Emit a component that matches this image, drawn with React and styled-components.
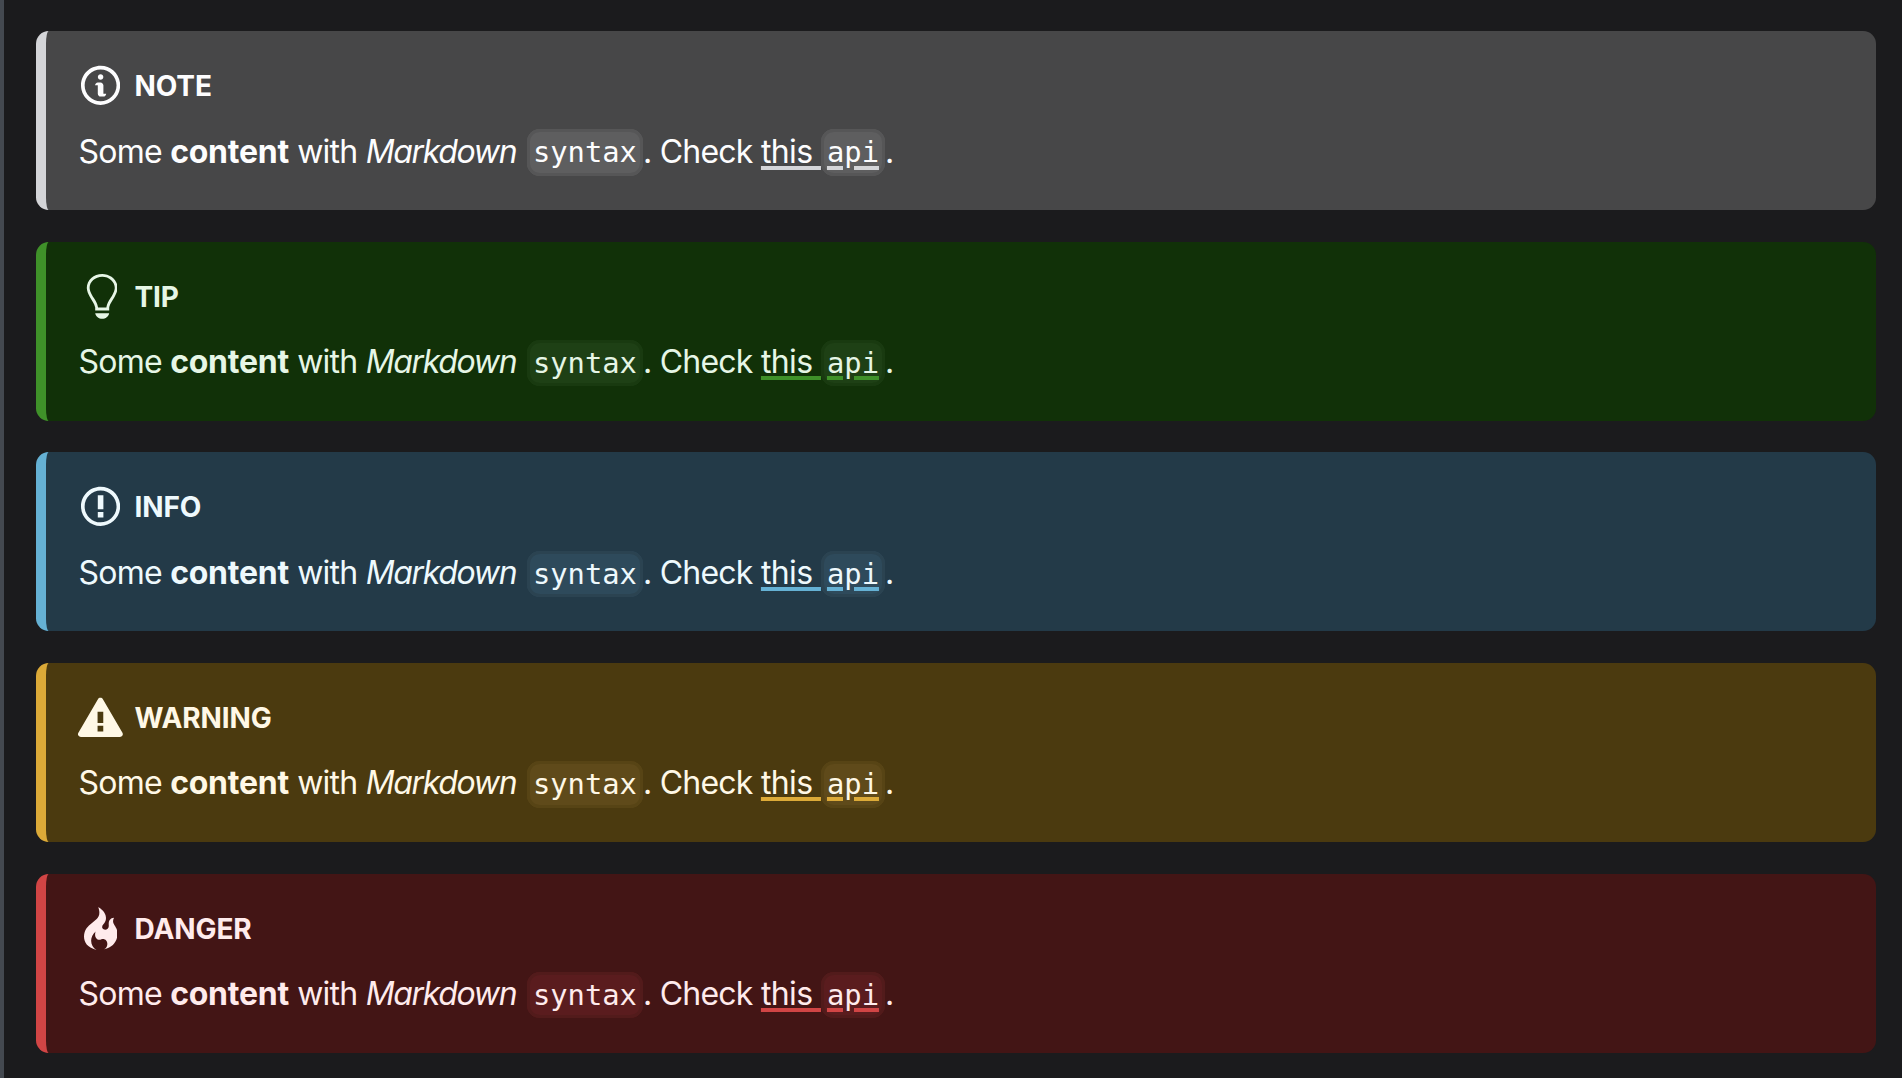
import React from 'react'
import styled, { createGlobalStyle } from 'styled-components'

const GlobalStyle = createGlobalStyle`
  * {
    box-sizing: border-box;
  }
  body {
    margin: 0;
    background: #1b1b1d;
    font-family: Inter, "Liberation Sans", sans-serif;
  }
`

const variants = {
  note: {
    bg: '#474748',
    bar: '#d4d5d8',
    text: '#fdfdfe',
    codeBg: '#5e5e5f',
    codeBorder: '#565657',
  },
  tip: {
    bg: '#113108',
    bar: '#3f9129',
    text: '#e6f6e6',
    codeBg: '#1e4015',
    codeBorder: '#193a10',
  },
  info: {
    bg: '#233a48',
    bar: '#65b1d4',
    text: '#eef9fd',
    codeBg: '#2e4a5b',
    codeBorder: '#2b4351',
  },
  warning: {
    bg: '#4b3a0f',
    bar: '#dcaa38',
    text: '#fff8e6',
    codeBg: '#5f4a1a',
    codeBorder: '#574415',
  },
  danger: {
    bg: '#431515',
    bar: '#d14545',
    text: '#ffebec',
    codeBg: '#5a1c1e',
    codeBorder: '#521b1b',
  },
}

const icons = {
  note: {
    box: '0 0 14 16',
    d: 'M6.3 5.69a.942.942 0 0 1-.28-.7c0-.28.09-.52.28-.7.19-.18.42-.28.7-.28.28 0 .52.09.7.28.18.19.28.42.28.7 0 .28-.09.52-.28.7a1 1 0 0 1-.7.3c-.28 0-.52-.11-.7-.3zM8 7.99c-.02-.25-.11-.48-.31-.69-.2-.19-.42-.3-.69-.31H6c-.27.02-.48.13-.69.31-.2.2-.3.44-.31.69h1v3c.02.27.11.5.31.69.2.2.42.31.69.31h1c.27 0 .48-.11.69-.31.2-.19.3-.42.31-.69H8V7.98v.01zM7 2.3c-3.14 0-5.7 2.54-5.7 5.68 0 3.14 2.56 5.7 5.7 5.7s5.7-2.55 5.7-5.7c0-3.15-2.56-5.69-5.7-5.69v.01zM7 .98c3.86 0 7 3.14 7 7s-3.14 7-7 7-7-3.12-7-7 3.14-7 7-7z',
  },
  tip: {
    box: '0 0 12 16',
    d: 'M6.5 0C3.48 0 1 2.19 1 5c0 .92.55 2.25 1 3 1.34 2.25 1.78 2.78 2 4v1h5v-1c.22-1.22.66-1.75 2-4 .45-.75 1-2.08 1-3 0-2.81-2.48-5-5.5-5zm3.64 7.48c-.25.44-.47.8-.67 1.11-.86 1.41-1.25 2.06-1.45 3.23-.02.05-.02.11-.02.17H5c0-.06 0-.13-.02-.17-.2-1.17-.59-1.83-1.45-3.23-.2-.31-.42-.67-.67-1.11C2.44 6.78 2 5.65 2 5c0-2.2 2.02-4 4.5-4 1.22 0 2.36.42 3.22 1.19C10.55 2.94 11 3.94 11 5c0 .66-.44 1.78-.86 2.48zM4 14h5c-.23 1.14-1.3 2-2.5 2s-2.27-.86-2.5-2z',
  },
  info: {
    box: '0 0 14 16',
    d: 'M7 2.3c3.14 0 5.7 2.56 5.7 5.7s-2.56 5.7-5.7 5.7A5.71 5.71 0 0 1 1.3 8c0-3.14 2.56-5.7 5.7-5.7zM7 1C3.14 1 0 4.14 0 8s3.14 7 7 7 7-3.14 7-7-3.14-7-7-7zm1 3H6v5h2V4zm0 6H6v2h2v-2z',
  },
  warning: {
    box: '0 0 16 16',
    d: 'M8.893 1.5c-.183-.31-.52-.5-.887-.5s-.703.19-.886.5L.138 13.499a.98.98 0 0 0 0 1.001c.193.31.53.501.886.501h13.964c.367 0 .704-.19.877-.5a1.03 1.03 0 0 0 .01-1.002L8.893 1.5zm.133 11.497H6.987v-2.003h2.039v2.003zm0-3.004H6.987V5.987h2.039v4.006z',
  },
  danger: {
    box: '0 0 12 16',
    d: 'M5.05.31c.81 2.17.41 3.38-.52 4.31C3.55 5.67 1.98 6.45.9 7.98c-1.45 2.05-1.7 6.53 3.53 7.7-2.2-1.16-2.67-4.52-.3-6.61-.61 2.03.53 3.33 1.94 2.86 1.39-.47 2.3.53 2.27 1.67-.02.78-.31 1.44-1.13 1.81 3.42-.59 4.78-3.42 4.78-5.56 0-2.84-2.53-3.22-1.25-5.61-1.52.13-2.03 1.13-1.89 2.75.09 1.08-1.02 1.8-1.86 1.33-.67-.41-.66-1.19-.06-1.78C8.18 5.31 8.68 2.45 5.05.32L5.03.3l.02.01z',
  },
}

const Page = styled.div`
  min-height: 100vh;
  border-left: 4px solid #444950;
  padding: 31px 26px 0 32px;
  display: flex;
  flex-direction: column;
  gap: 31.5px;
`

const Card = styled.div`
  height: 179.17px;
  padding: 24px 32px 0 32.5px;
  border-left: 10px solid ${(p) => variants[p.$kind].bar};
  border-radius: 12.8px;
  background: ${(p) => variants[p.$kind].bg};
  color: ${(p) => variants[p.$kind].text};
`

const Heading = styled.div`
  display: flex;
  align-items: center;
  height: 62px;
  margin-bottom: 8.5px;
  font-size: 28px;
  font-weight: 700;
  letter-spacing: -0.1px;
  text-transform: uppercase;
`

const IconBox = styled.span`
  display: flex;
  justify-content: center;
  width: 45px;
  margin-left: -0.5px;
  margin-right: 11.5px;
  margin-bottom: 1px;
`

const IconSvg = styled.svg`
  height: 44.8px;
  fill: currentColor;
`

const Body = styled.div`
  font-size: 32px;
  line-height: 52.8px;
  letter-spacing: -0.75px;
`

const Strong = styled.strong`
  letter-spacing: -0.25px;
`

const Emphasis = styled.em`
  margin-right: 2.4px;
  letter-spacing: -1.35px;
`

const Code = styled.code`
  font-family: "DejaVu Sans Mono", monospace;
  font-size: 28.8px;
  letter-spacing: 0;
  padding: 3.2px 3px;
  background: ${(p) => variants[p.$kind].codeBg};
  border: 3px solid ${(p) => variants[p.$kind].codeBorder};
  border-radius: 12.8px;
`

const Link = styled.a`
  color: inherit;
  letter-spacing: -0.6px;
  text-decoration: underline;
  text-decoration-color: ${(p) => variants[p.$kind].bar};
  text-decoration-thickness: 3.5px;
  text-underline-offset: 2.5px;
`

function Admonition({ kind }) {
  const icon = icons[kind]
  return (
    <Card $kind={kind}>
      <Heading>
        <IconBox>
          <IconSvg viewBox={icon.box}>
            <path fillRule="evenodd" d={icon.d} />
          </IconSvg>
        </IconBox>
        {kind}
      </Heading>
      <Body>
        Some <Strong>content</Strong> with <Emphasis>Markdown</Emphasis> <Code $kind={kind}>syntax</Code>. Check{' '}
        <Link $kind={kind} href="#">
          this <Code $kind={kind}>api</Code>
        </Link>
        .
      </Body>
    </Card>
  )
}

export default function App() {
  return (
    <>
      <GlobalStyle />
      <Page>
        {Object.keys(variants).map((kind) => (
          <Admonition key={kind} kind={kind} />
        ))}
      </Page>
    </>
  )
}
